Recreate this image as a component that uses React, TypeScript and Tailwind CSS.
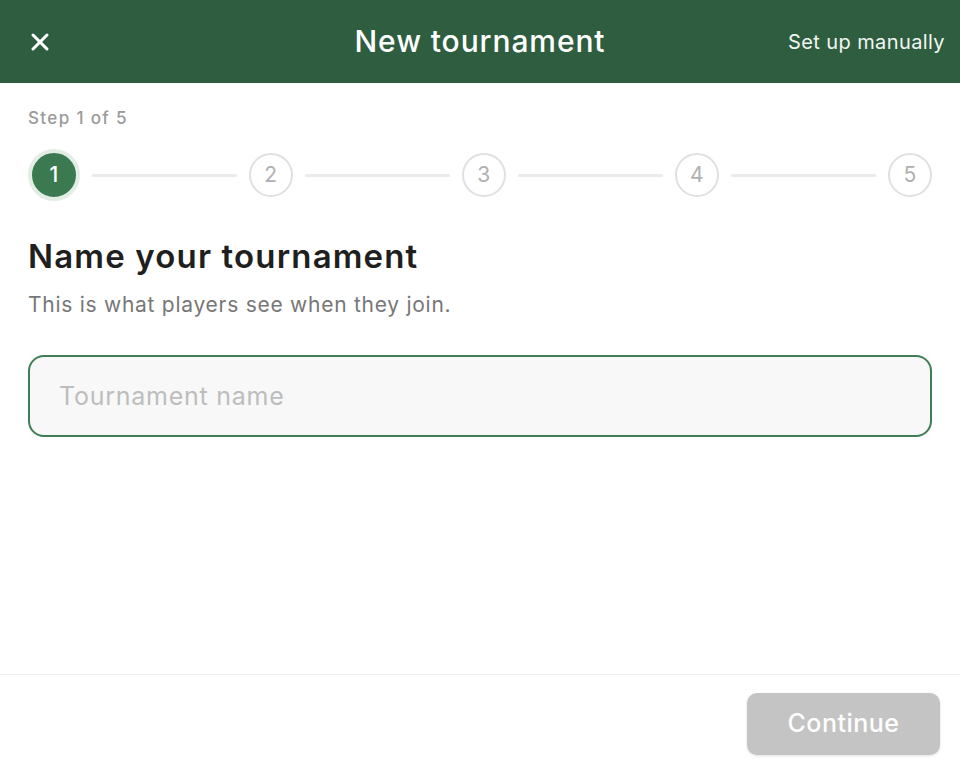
import { X } from 'lucide-react';

const steps = [1, 2, 3, 4, 5];

function StepDot({ n, active }: { n: number; active: boolean }) {
  if (active) {
    return (
      <div className="flex h-[52px] w-[52px] shrink-0 items-center justify-center rounded-full border-4 border-[#e2eee5] bg-[#3b7a50] text-[21px] font-medium text-white">
        {n}
      </div>
    );
  }
  return (
    <div className="flex h-[44px] w-[44px] shrink-0 items-center justify-center rounded-full border-2 border-[#e0e0e0] bg-white text-[21px] text-[#b0b0b0]">
      {n}
    </div>
  );
}

export default function App() {
  return (
    <div
      className="flex h-[766px] w-[960px] flex-col bg-white tracking-[0.03em]"
      style={{ fontFamily: 'Inter, "Open Sans", sans-serif' }}
    >
      <header className="relative flex h-[83px] shrink-0 items-center justify-center bg-[#2f5d40]">
        <button className="absolute left-[26px] top-[28px] text-white">
          <X size={28} strokeWidth={2.6} />
        </button>
        <h1 className="text-[30px] font-medium tracking-[0.03em] text-white">New tournament</h1>
        <button className="absolute right-[15px] top-[27px] text-[20px] tracking-[0.02em] text-[#f2f7f3]">
          Set up manually
        </button>
      </header>

      <main className="flex-1 px-7 pt-[23px]">
        <div className="text-[17px] font-medium leading-[25px] tracking-[0.08em] text-[#9a9a9a]">Step 1 of 5</div>

        <div className="mt-[18px] flex items-center">
          {steps.map((n, i) => (
            <div key={n} className={`flex items-center ${i === 0 ? '' : 'flex-1'}`}>
              {i > 0 ? <div className="mx-3 h-[3px] flex-1 rounded-full bg-[#ebebeb]" /> : null}
              <StepDot n={n} active={i === 0} />
            </div>
          ))}
        </div>

        <h2 className="mt-[30px] text-[33px] font-semibold leading-[50px] tracking-[0.035em] text-[#1f1f1f]">
          Name your tournament
        </h2>
        <p className="mt-[8px] text-[21px] leading-[31px] tracking-[0.035em] text-[#777]">
          This is what players see when they join.
        </p>

        <input
          placeholder="Tournament name"
          className="mt-[35px] box-border h-[82px] w-full rounded-[16px] border-2 border-[#3f7d54] bg-[#f8f8f8] px-[29px] text-[25px] tracking-[0.03em] text-[#222] outline-none placeholder:text-[#bdbdbd]"
        />
      </main>

      <footer className="flex h-[92px] shrink-0 justify-end border-t border-[#ededed] pr-5 pt-[18px]">
        <button className="h-[62px] w-[193px] rounded-[10px] bg-[#c4c4c4] text-[25px] font-medium tracking-[0.02em] text-white shadow-[0_1px_3px_rgba(0,0,0,0.12)]">
          Continue
        </button>
      </footer>
    </div>
  );
}
